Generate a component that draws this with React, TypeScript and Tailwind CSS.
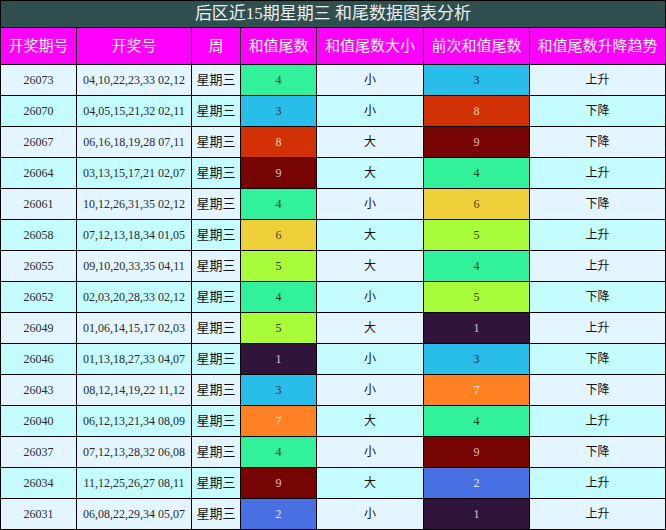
const ROWS: [string, string, number, string, number, string][] = [
  ["26073", "04,10,22,23,33 02,12", 4, "小", 3, "上升"],
  ["26070", "04,05,15,21,32 02,11", 3, "小", 8, "下降"],
  ["26067", "06,16,18,19,28 07,11", 8, "大", 9, "下降"],
  ["26064", "03,13,15,17,21 02,07", 9, "大", 4, "上升"],
  ["26061", "10,12,26,31,35 02,12", 4, "小", 6, "下降"],
  ["26058", "07,12,13,18,34 01,05", 6, "大", 5, "上升"],
  ["26055", "09,10,20,33,35 04,11", 5, "大", 4, "上升"],
  ["26052", "02,03,20,28,33 02,12", 4, "小", 5, "下降"],
  ["26049", "01,06,14,15,17 02,03", 5, "大", 1, "上升"],
  ["26046", "01,13,18,27,33 04,07", 1, "小", 3, "下降"],
  ["26043", "08,12,14,19,22 11,12", 3, "小", 7, "下降"],
  ["26040", "06,12,13,21,34 08,09", 7, "大", 4, "上升"],
  ["26037", "07,12,13,28,32 06,08", 4, "小", 9, "下降"],
  ["26034", "11,12,25,26,27 08,11", 9, "大", 2, "上升"],
  ["26031", "06,08,22,29,34 05,07", 2, "小", 1, "上升"],
];

// tail digit -> cell colour
const TAIL: Record<number, string> = {
  1: "bg-[#311439] text-[#d8c8dc]",
  2: "bg-[#4870e2] text-[#e8ecff]",
  3: "bg-[#29bde9] text-[#1a2a33]",
  4: "bg-[#31f29b] text-[#1a3326]",
  5: "bg-[#a8fc3a] text-[#2a3a10]",
  6: "bg-[#eed03a] text-[#4a3a10]",
  7: "bg-[#ff8123] text-[#fff2e6]",
  8: "bg-[#d13104] text-[#f6d0c0]",
  9: "bg-[#760403] text-[#e0c0c0]",
};

const HEAD = ["开奖期号", "开奖号", "周", "和值尾数", "和值尾数大小", "前次和值尾数", "和值尾数升降趋势"];

export default function App() {
  return (
    <div
      className="w-[666px] h-[530px] bg-black p-px grid gap-px grid-cols-[75px_114px_48px_75px_106px_105px_135px] grid-rows-[26px_36px_repeat(15,30px)] text-[12px] text-[#2a2a2a]"
      style={{ fontFamily: '"Liberation Serif", "Noto Sans CJK SC", serif' }}
    >
      <div className="col-span-7 bg-[#2f4f4f] text-[#eeeeee] text-[17px] flex items-center justify-center">
        后区近15期星期三 和尾数据图表分析
      </div>
      {HEAD.map((h) => (
        <div key={h} className="bg-[#ff00ff] text-white text-[15px] flex items-center justify-center">
          {h}
        </div>
      ))}
      {ROWS.map((r, i) => {
        const bg = i % 2 === 0 ? "bg-[#e3f6ff]" : "bg-[#c4fcff]";
        return [
          <div key={`${i}a`} className={`${bg} flex items-center justify-center`}>{r[0]}</div>,
          <div key={`${i}b`} className={`${bg} flex items-center justify-center`}>{r[1]}</div>,
          <div key={`${i}c`} className={`${bg} flex items-center justify-center text-[13px] text-[#111]`}>星期三</div>,
          <div key={`${i}d`} className={`${TAIL[r[2]]} flex items-center justify-center`}>{r[2]}</div>,
          <div key={`${i}e`} className={`${bg} flex items-center justify-center text-[#111]`}>{r[3]}</div>,
          <div key={`${i}f`} className={`${TAIL[r[4]]} flex items-center justify-center`}>{r[4]}</div>,
          <div key={`${i}g`} className={`${bg} flex items-center justify-center text-[#111]`}>{r[5]}</div>,
        ];
      })}
    </div>
  );
}
